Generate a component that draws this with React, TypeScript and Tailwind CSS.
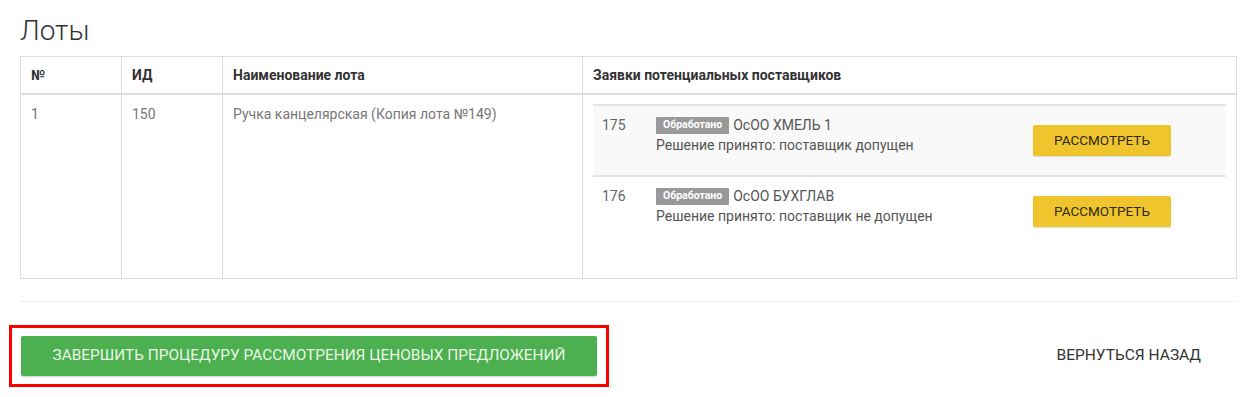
import React from "react";

type Bid = { num: string; org: string; decision: string; striped: boolean };

const bids: Bid[] = [
  { num: "175", org: "ОсОО ХМЕЛЬ 1", decision: "Решение принято: поставщик допущен", striped: true },
  { num: "176", org: "ОсОО БУХГЛАВ", decision: "Решение принято: поставщик не допущен", striped: false },
];

export default function App() {
  return (
    <div className="w-[1246px] h-[397px] bg-white font-['Roboto',sans-serif] pt-[15px] pl-[20px] pr-[9px]">
      <h2 className="text-[28px] font-light leading-[31px] text-[#333] mb-[10px]">Лоты</h2>

      <table className="w-full table-fixed border-collapse border border-[#ddd]">
        <colgroup>
          <col className="w-[101px]" />
          <col className="w-[101px]" />
          <col className="w-[360px]" />
          <col />
        </colgroup>
        <thead>
          <tr className="border-b-2 border-[#ddd]">
            <th className="border border-[#ddd] border-b-2 px-[10px] py-[8px] text-left text-[14px] leading-[20px] font-bold text-[#333]">№</th>
            <th className="border border-[#ddd] border-b-2 px-[10px] py-[8px] text-left text-[14px] leading-[20px] font-bold text-[#333]">ИД</th>
            <th className="border border-[#ddd] border-b-2 px-[10px] py-[8px] text-left text-[14px] leading-[20px] font-bold text-[#333]">Наименование лота</th>
            <th className="border border-[#ddd] border-b-2 px-[10px] py-[8px] text-left text-[14px] leading-[20px] font-bold text-[#333]">Заявки потенциальных поставщиков</th>
          </tr>
        </thead>
        <tbody>
          <tr>
            <td className="border border-[#ddd] align-top px-[10px] pt-[9px] text-[14px] leading-[20px] text-[#777]">1</td>
            <td className="border border-[#ddd] align-top px-[10px] pt-[9px] text-[14px] leading-[20px] text-[#777]">150</td>
            <td className="border border-[#ddd] align-top px-[10px] pt-[9px] text-[14px] leading-[20px] text-[#777]">Ручка канцелярская (Копия лота №149)</td>
            <td className="border border-[#ddd] align-top px-[10px] pt-[9px] pb-[12px]">
              <div className="mb-[20px]">
                {bids.map((b) => (
                  <div
                    key={b.num}
                    className={`flex h-[71px] border-t-2 border-[#e4e4e4] ${b.striped ? "bg-[#f9f9f9]" : "bg-white"}`}
                  >
                    <div className="w-[63px] pl-[9px] pt-[9px] text-[14px] leading-[20px] text-[#666]">{b.num}</div>
                    <div className="flex-1 pt-[9px] text-[14px] leading-[20px] text-[#555]">
                      <div className="flex items-center">
                        <span className="inline-flex items-center h-[17px] px-[7px] bg-[#999] text-white text-[10.5px] font-bold leading-none rounded-[1px] mr-[4px]">
                          Обработано
                        </span>
                        <span>{b.org}</span>
                      </div>
                      <div>{b.decision}</div>
                    </div>
                    <div className="w-[193px] flex items-center">
                      <button className="w-[138px] h-[31px] rounded-[2px] bg-[#f0c42c] text-[13.5px] font-normal text-[#2f2a10] uppercase shadow-[0_1px_1px_rgba(0,0,0,0.12)]">
                        Рассмотреть
                      </button>
                    </div>
                  </div>
                ))}
              </div>
            </td>
          </tr>
        </tbody>
      </table>

      <hr className="mt-[22px] border-0 border-t border-[#eee]" />

      <div className="mt-[23px] flex items-center justify-between -ml-[11px]">
        <div className="border-[3px] border-[#ff0000] px-[9px] py-[8px]">
          <button className="w-[576px] h-[40px] rounded-[2px] bg-[#4caf50] text-[#eaf7e4] text-[15.4px] uppercase shadow-[0_1px_2px_rgba(0,0,0,0.2)]">
            Завершить процедуру рассмотрения ценовых предложений
          </button>
        </div>
        <button className="mr-[36px] text-[15.5px] text-[#333] uppercase">Вернуться назад</button>
      </div>
    </div>
  );
}
